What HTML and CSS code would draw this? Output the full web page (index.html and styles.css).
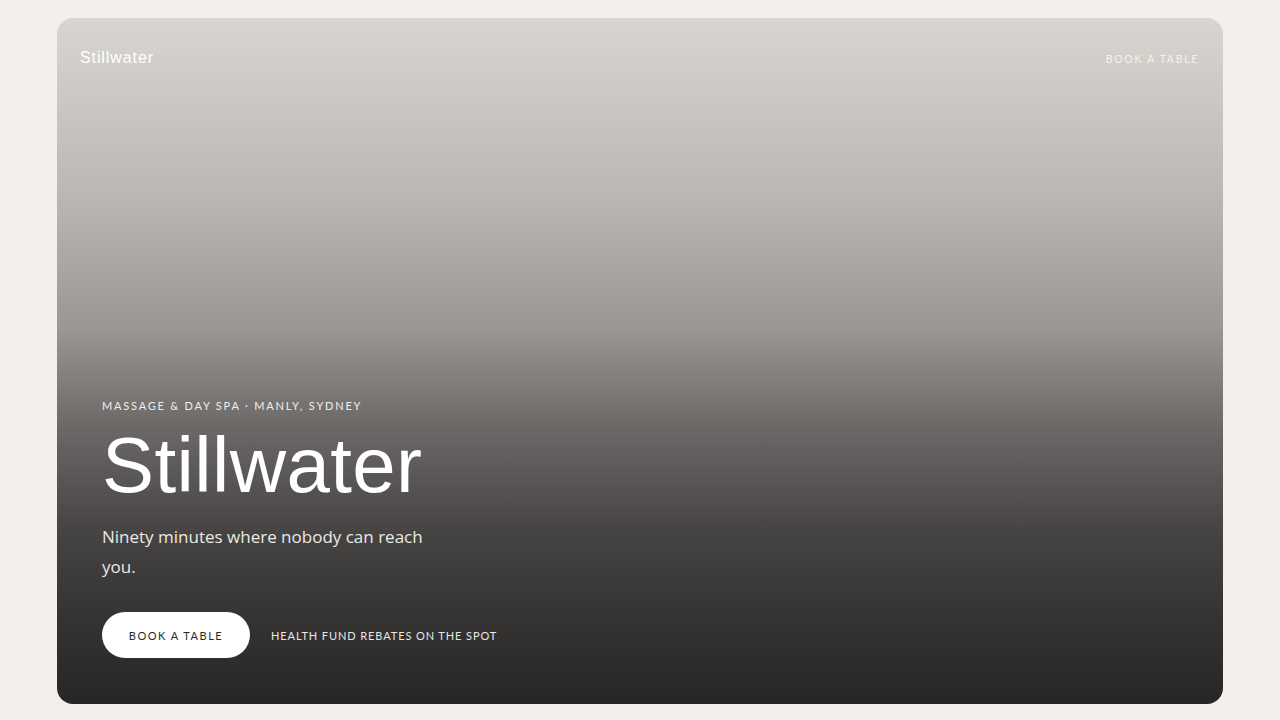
FILE: index.html
```html
<!DOCTYPE html>
<html lang="en">
<head>
<meta charset="utf-8">
<title>Stillwater</title>
<link rel="stylesheet" href="styles.css">
</head>
<body>
<main class="page">
  <section class="hero">
    <header class="nav">
      <a class="brand" href="#">Stillwater</a>
      <a class="nav-link" href="#">BOOK A TABLE</a>
    </header>
    <div class="content">
      <p class="eyebrow">MASSAGE &amp; DAY SPA · MANLY, SYDNEY</p>
      <h1 class="title">Stillwater</h1>
      <p class="lede">Ninety minutes where nobody can reach you.</p>
      <div class="actions">
        <a class="btn" href="#">BOOK A TABLE</a>
        <span class="note">HEALTH FUND REBATES ON THE SPOT</span>
      </div>
    </div>
  </section>
</main>
</body>
</html>
```

FILE: styles.css
```css
* { box-sizing: border-box; }
html, body { margin: 0; padding: 0; }
body {
  background: #f3f0eb;
  font-family: "Open Sans", "Noto Sans", sans-serif;
}
.page {
  padding: 18px 57px 16px;
  height: 720px;
}
.hero {
  height: 686px;
  border-radius: 16px;
  background: linear-gradient(180deg, #d9d6d1 0%, #bcb8b4 25%, #9b9794 45%, #6a6766 60%, #464443 75%, #353332 88%, #282625 100%);
  display: flex;
  flex-direction: column;
  justify-content: space-between;
  overflow: hidden;
}
.nav {
  display: flex;
  justify-content: space-between;
  align-items: center;
  padding: 31px 24px 0 23px;
}
.brand {
  font-family: "Liberation Sans", Arial, sans-serif;
  font-size: 16px;
  font-weight: 400;
  letter-spacing: 0.9px;
  color: #ffffff;
  text-decoration: none;
}
.nav-link {
  font-family: "Lato", sans-serif;
  font-size: 10.5px;
  letter-spacing: 1.7px;
  color: #f4f2ef;
  text-decoration: none;
  margin-top: 2px;
}
.content {
  padding: 0 45px 46px;
}
.eyebrow {
  margin: 0 0 9px;
  font-family: "Lato", sans-serif;
  font-size: 11px;
  letter-spacing: 1.8px;
  color: #f0eeeb;
}
.title {
  margin: 0;
  font-family: "Liberation Sans", Arial, sans-serif;
  font-weight: 400;
  font-size: 78px;
  line-height: 88px;
  letter-spacing: 0.4px;
  color: #ffffff;
}
.lede {
  margin: 13px 0 30px;
  max-width: 350px;
  font-size: 17px;
  line-height: 30px;
  color: #ebe9e6;
}
.actions {
  display: flex;
  align-items: center;
  gap: 21px;
}
.btn {
  display: inline-flex;
  align-items: center;
  justify-content: center;
  width: 148px;
  height: 46px;
  border-radius: 23px;
  background: #ffffff;
  color: #2c2a29;
  font-family: "Lato", sans-serif;
  font-size: 11px;
  letter-spacing: 1.5px;
  text-decoration: none;
}
.note {
  font-family: "Lato", sans-serif;
  font-size: 11px;
  letter-spacing: 0.9px;
  color: #e9e6e3;
}
```
